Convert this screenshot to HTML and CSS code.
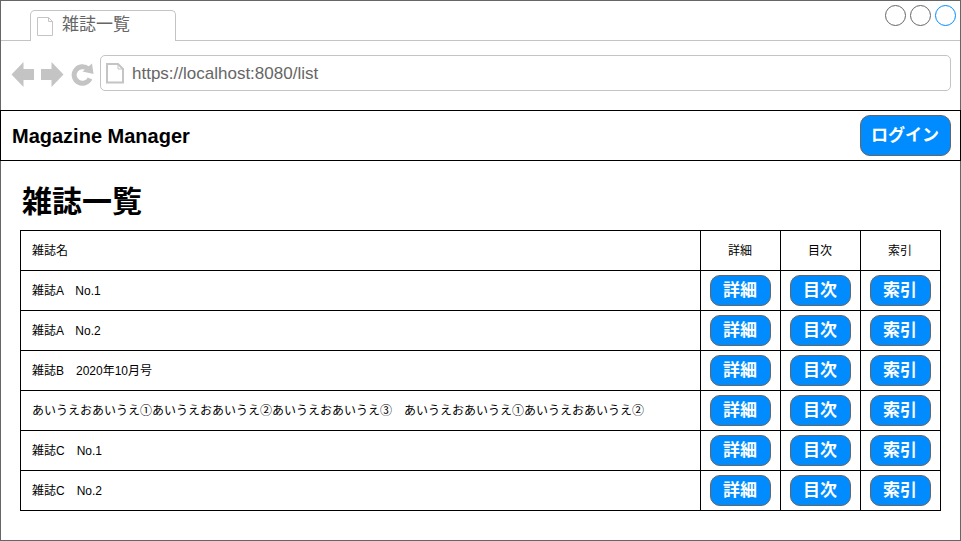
FILE: index.html
```html
<!DOCTYPE html>
<html lang="ja">
<head>
<meta charset="utf-8">
<title>雑誌一覧</title>
<link rel="stylesheet" href="styles.css">
</head>
<body>
<div class="window">
  <div class="tabbar">
    <div class="tab">
      <svg class="tab-icon" width="17" height="20" viewBox="0 0 17 20"><path d="M.5.5h11l4 4v14H.5zM11.500.5v4h4" fill="none" stroke="#c4c4c4"/></svg>
      <span>雑誌一覧</span>
    </div>
    <svg class="controls" width="75" height="24" viewBox="0 0 75 24" fill="none" stroke="#666">
      <circle cx="11.500" cy="11.500" r="10"/><circle cx="36.500" cy="11.500" r="10"/><circle cx="61.500" cy="11.500" r="10" stroke="#008cff"/>
    </svg>
  </div>
  <div class="toolbar">
    <svg class="nav" width="84" height="26" viewBox="0 0 84 26" fill="#c4c4c4">
      <path d="M.5 12.500 12.500 0v7H23v11H12.500v7z"/>
      <path d="M52.500 12.500 40.500 0v7H30v11h10.500v7z"/>
      <path d="M79 16.500A8.300 8.300 0 1 1 77 6.800" fill="none" stroke="#c4c4c4" stroke-width="5"/>
      <path d="M81 1.500 82.500 12 71.500 9.500z"/>
    </svg>
    <div class="address">
      <svg width="18" height="21" viewBox="0 0 18 21" fill="none" stroke="#c4c4c4"><path d="M1 1h11l5 5v13.500H1z" stroke-width="2"/><path d="M12 1v5h5"/></svg>
      <span>https://localhost:8080/list</span>
    </div>
  </div>
  <header class="header">
    <span class="brand">Magazine Manager</span>
    <button class="btn login">ログイン</button>
  </header>
  <main>
    <h1>雑誌一覧</h1>
    <div class="grid">
      <div class="name">雑誌名</div><div>詳細</div><div>目次</div><div>索引</div>
      <div class="name">雑誌A　No.1</div><div><button class="btn">詳細</button></div><div><button class="btn">目次</button></div><div><button class="btn">索引</button></div>
      <div class="name">雑誌A　No.2</div><div><button class="btn">詳細</button></div><div><button class="btn">目次</button></div><div><button class="btn">索引</button></div>
      <div class="name">雑誌B　2020年10月号</div><div><button class="btn">詳細</button></div><div><button class="btn">目次</button></div><div><button class="btn">索引</button></div>
      <div class="name">あいうえおあいうえ①あいうえおあいうえ②あいうえおあいうえ③　あいうえおあいうえ①あいうえおあいうえ②</div><div><button class="btn">詳細</button></div><div><button class="btn">目次</button></div><div><button class="btn">索引</button></div>
      <div class="name">雑誌C　No.1</div><div><button class="btn">詳細</button></div><div><button class="btn">目次</button></div><div><button class="btn">索引</button></div>
      <div class="name">雑誌C　No.2</div><div><button class="btn">詳細</button></div><div><button class="btn">目次</button></div><div><button class="btn">索引</button></div>
    </div>
  </main>
</div>
</body>
</html>
```
FILE: styles.css
```css
* { box-sizing: border-box; }
body {
  margin: 0;
  background: #fff;
  color: #000;
  font-family: "Liberation Sans", "Noto Sans CJK JP", sans-serif;
}
.window {
  width: 961px;
  height: 541px;
  border: 1px solid #666;
}
.tabbar {
  display: flex;
  justify-content: space-between;
  height: 40px;
  padding: 9px 1px 0 29px;
  border-bottom: 1px solid #c4c4c4;
}
.tab {
  display: flex;
  width: 146px;
  height: 31px;
  padding: 0 0 0 6px;
  border: 1px solid #c4c4c4;
  border-bottom: 0;
  border-radius: 5px 5px 0 0;
  background: #fff;
  color: #666;
  font-size: 17px;
  line-height: 28px;
}
.tab-icon { margin: 6px 8px 0 0; }
.controls { margin-top: -6px; }
.toolbar {
  display: flex;
  height: 69px;
  padding: 14px 9px 0 10px;
}
.nav { margin: 7px 5px 0 0; }
.address {
  display: flex;
  align-items: center;
  gap: 8px;
  width: 851px;
  height: 36px;
  padding-left: 5px;
  border: 1px solid #c4c4c4;
  border-radius: 5px;
  color: #666;
  font-size: 17px;
}
.address span { padding-top: 2px; }
.header {
  display: flex;
  justify-content: space-between;
  align-items: center;
  height: 51px;
  margin: 0 -1px;
  padding: 0 9px 0 11px;
  border: 1px solid #000;
}
.brand {
  padding-top: 2px;
  font-size: 20px;
  font-weight: bold;
}
.btn {
  display: block;
  width: 61px;
  height: 31px;
  padding: 1px 1px 0 0;
  border: 1px solid #666;
  border-radius: 10px;
  background: #008cff;
  color: #fff;
  font: bold 17px/26px "Liberation Sans", "Noto Sans CJK JP", sans-serif;
}
.login {
  width: 91px;
  height: 41px;
}
main { padding: 19px 19px 0; }
h1 {
  height: 50px;
  margin: 0;
  padding-left: 2px;
  font-size: 30px;
  line-height: 44px;
}
.grid {
  display: grid;
  grid-template-columns: 680px repeat(3, 80px);
  grid-auto-rows: 40px;
  width: 921px;
  border-right: 1px solid #000;
  border-bottom: 1px solid #000;
  font-size: 12px;
}
.grid > div {
  display: flex;
  align-items: center;
  justify-content: center;
  padding: 0 1px 3px 0;
  border-top: 1px solid #000;
  border-left: 1px solid #000;
}
.grid > div:has(.btn) { padding: 0; }
.grid > .name {
  justify-content: flex-start;
  padding-left: 11px;
  white-space: nowrap;
}
```
